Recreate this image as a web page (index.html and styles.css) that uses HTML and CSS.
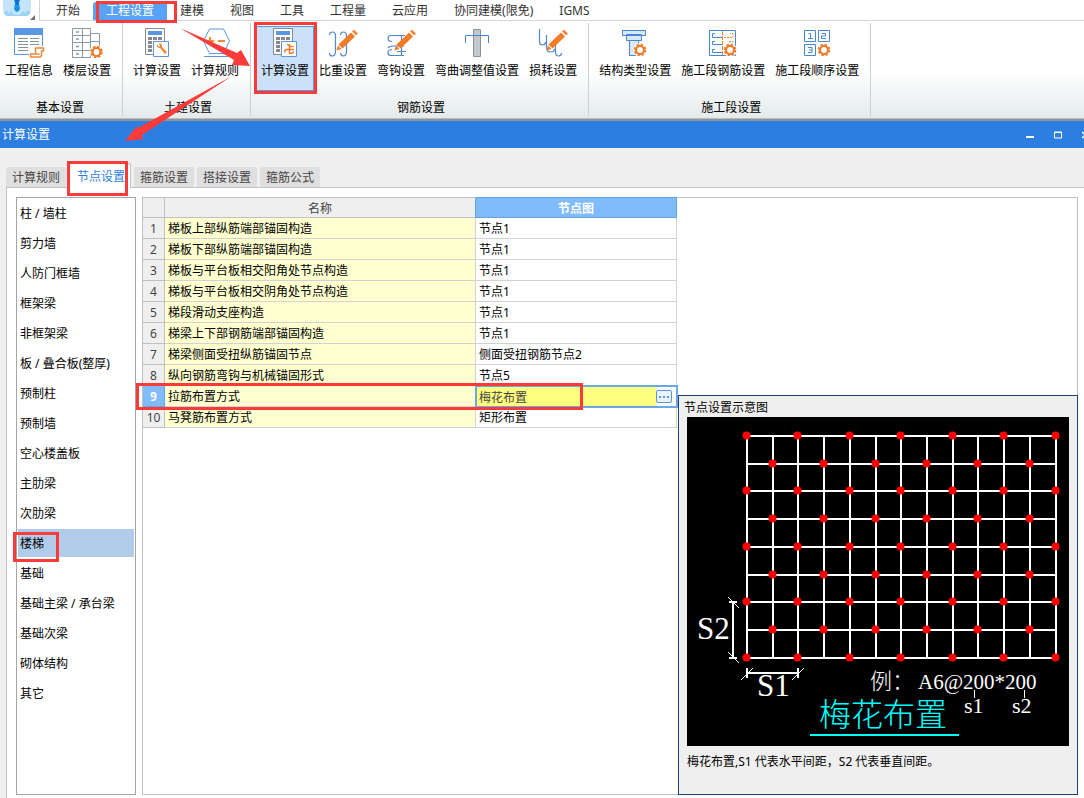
FILE: index.html
```html
<!DOCTYPE html>
<html lang="zh-CN">
<head>
<meta charset="utf-8">
<title>计算设置</title>
<link rel="stylesheet" href="styles.css">
</head>
<body>
<svg class="defs" aria-hidden="true">
  <defs>
    <g id="gear">
      <circle r="7" fill="#fff"/>
      <circle r="5" fill="none" stroke="#ee7a2a" stroke-width="2.6" stroke-dasharray="2.2 1.727"/>
      <circle r="4" fill="#fff" stroke="#ee7a2a" stroke-width="2.2"/>
    </g>
    <g id="pencil">
      <path d="M9.5 24.5l1.5-5 3.500 3.500z" fill="#ee7a2a"/>
      <path d="M11.500 18.500L24 6.500l4 4-12.500 12z" fill="#f07c28"/>
      <path d="M25 5.500l2-2 4 4-2 2z" fill="#ee8a45"/>
    </g>
    <g id="calc">
      <path d="M4.500 2.500h19v26h-19z" fill="#fff" stroke="#87898c"/>
      <path d="M7 5h14v4H7z" fill="#5a97e2"/>
      <path d="M7 11h4v3H7zM12 11h4v3h-4zM17 11h4v3h-4zM7 15h4v3H7zM12 15h4v3h-4zM7 19h4v3H7zM7 23h4v3H7z" fill="#87898c"/>
      <path d="M12.500 15.500h15v15h-15z" fill="#fff" stroke="#5a97e2"/>
    </g>
  </defs>
</svg>

<header class="menu">
  <div class="logo">
    <svg width="36" height="20" viewBox="0 0 36 20" aria-hidden="true">
      <path d="M3 0h28v10q0 6-6 6H9q-6 0-6-6z" fill="#c4e4fa"/>
      <path d="M4 13q3-5 5 1 2-6 4 0 4 2 8 0 2-6 4 0 2-6 5-1-1 3-5 3H9q-4 0-5-3z" fill="#9bd2f5"/>
      <path d="M14 0h6l-1 3 1 6q-1 3-3 3t-3-3l1-6z" fill="#1a8fe8"/>
      <path d="M15 0h4l-1 5h-2z" fill="#0c6fd0"/>
      <path d="M35 15v5h-5z" fill="#707070"/>
    </svg>
  </div>
  <nav class="menu-tabs">
    <button>开始</button>
    <button class="active">工程设置</button>
    <button>建模</button>
    <button>视图</button>
    <button>工具</button>
    <button>工程量</button>
    <button>云应用</button>
    <button>协同建模(限免)</button>
    <button>IGMS</button>
  </nav>
</header>

<section class="ribbon">
  <div class="group">
    <div class="tools">
      <button>
        <svg viewBox="0 0 32 32"><path d="M1.500 2.500h28v26h-28z" fill="#fff" stroke="#5a97e2"/><path d="M1 2h29v7H1z" fill="#5a97e2"/><path d="M5 12.500h10M17 12.500h9M5 15.500h10M17 15.500h9M5 18.500h10M17 18.500h9M5 21.500h10M5 24.500h10" stroke="#8b9296"/><path d="M16 20h16v12H16z" fill="#fff"/><path d="M22.500 27v-5h8v3h-2v4q0 2-2 2h-9v-3h9" fill="#fff" stroke="#e58a35" stroke-width="1.500"/></svg>
        <span>工程信息</span>
      </button>
      <button>
        <svg viewBox="0 0 32 32"><path d="M1.500 2.500h18v29h-18zM1.500 9.500h18M1.500 16.500h18M1.500 24.500h18M11.500 2.500v29M19.500 7.500h9v16M19.500 15.500h9M19.500 23.500h9" fill="none" stroke="#8b9a9e"/><path d="M5 6h3M5 13h3M5 20.500h3M5 28h3" stroke="#8b9a9e" stroke-width="1.500"/><use href="#gear" x="25.500" y="26"/></svg>
        <span>楼层设置</span>
      </button>
    </div>
    <div class="group-name">基本设置</div>
  </div>

  <div class="group">
    <div class="tools">
      <button>
        <svg viewBox="0 0 32 32"><use href="#calc"/><path d="M16 18q-1 4 3 4l5 6 2-2-5-5q0-4-3-4l1 3-1 1z" fill="#ee8a35"/></svg>
        <span>计算设置</span>
      </button>
      <button>
        <svg viewBox="0 0 32 32"><path d="M10.500 3h14l6 12-6 12.500h-14L4.500 15zM5 30.500h24" fill="none" stroke="#5a97e2"/><path d="M7 15h8M11 11v8M19 15h7" stroke="#ee8a35" stroke-width="2"/></svg>
        <span>计算规则</span>
      </button>
    </div>
    <div class="group-name">土建设置</div>
  </div>

  <div class="group">
    <div class="tools">
      <button class="selected">
        <svg viewBox="0 0 32 32"><use href="#calc"/><path d="M20.500 18v10M18 18.500q2.500 0 2.500 2h4M25 23.500h-7q-3 0-2 3M20.500 27.500q4 0 4-2" fill="none" stroke="#ee7a2a" stroke-width="1.500"/></svg>
        <span>计算设置</span>
      </button>
      <button>
        <svg viewBox="0 0 32 32"><path d="M2.500 9q0-3 3-3t3 4v15q0 5-3 5t-3-3M13.500 9q0-3 3-3t3 4v15q0 5-3 5t-3-3" fill="none" stroke="#5089cc" stroke-width="1.200"/><use href="#pencil"/></svg>
        <span>比重设置</span>
      </button>
      <button>
        <svg viewBox="0 0 32 32"><path d="M20 9.500H6q-3 0-3 3t4 3M3 22q1-2 5-2h11M19 29.500H6q-3 0-3-3t4-3M16.500 9v20M12 25.500h9" fill="none" stroke="#5089cc" stroke-width="1.200"/><use href="#pencil"/></svg>
        <span>弯钩设置</span>
      </button>
      <button>
        <svg viewBox="0 0 32 32"><path d="M12.500 3.500h7v27h-7z" fill="#c3c8cd" stroke="#8b9296"/><path d="M4.500 17V9.500h23V17" fill="none" stroke="#4687cf"/></svg>
        <span>弯曲调整值设置</span>
      </button>
      <button>
        <svg viewBox="0 0 32 32"><path d="M2.500 3v13q0 3 3 3t3-3M9.500 9v12q0 5 4 5t4-3M18.500 17v9q0 4 3 4t3-3" fill="none" stroke="#5089cc" stroke-width="1.200"/><use href="#pencil"/></svg>
        <span>损耗设置</span>
      </button>
    </div>
    <div class="group-name">钢筋设置</div>
  </div>

  <div class="group">
    <div class="tools">
      <button>
        <svg viewBox="0 0 32 32"><path d="M10.500 14.500h9v15h-9zM3.500 4.500h23v5h-23zM7.500 8.500h15v6h-15z" fill="#d8e8fa" stroke="#4687cf"/><use href="#gear" x="21" y="24"/></svg>
        <span>结构类型设置</span>
      </button>
      <button>
        <svg viewBox="0 0 32 32"><path d="M2.500 4.500h26v25h-26zM15 11.500H5.500v-4H8M15 18.500H5.500v-3H8M15 26.500H5.500v-3H8" fill="none" stroke="#4687cf"/><path d="M15.500 5v25" stroke="#f08a20" stroke-dasharray="4 1"/><path d="M17 11.500h9v-4h-3M22 15.500h4v3" fill="none" stroke="#f08a20" stroke-dasharray="2 1"/><use href="#gear" x="23" y="24"/></svg>
        <span>施工段钢筋设置</span>
      </button>
      <button>
        <svg viewBox="0 0 32 32"><path d="M3.500 4.500h11v11h-11zM17.500 4.500h11v11h-11zM3.500 18.500h11v11h-11z" fill="#fff" stroke="#4687cf"/><path d="M7.500 7.500h2v5M7 12.500h5M20.500 7.500h4v2.500h-4v2.500h4.500M7 21.500h4v5H7M8 24h3" fill="none" stroke="#4687cf"/><use href="#gear" x="23" y="24"/></svg>
        <span>施工段顺序设置</span>
      </button>
    </div>
    <div class="group-name">施工段设置</div>
  </div>
</section>

<main class="dialog">
  <div class="titlebar">
    <span class="title">计算设置</span>
    <div class="window-buttons">
      <button aria-label="最小化"><svg viewBox="0 0 8 8"><path d="M0 5h8v2H0z" fill="#fff"/></svg></button>
      <button aria-label="最大化"><svg viewBox="0 0 8 8"><path d="M.5 1h7v6h-7zM0 1.500h8" fill="none" stroke="#fff"/></svg></button>
      <button aria-label="关闭"><svg viewBox="0 0 8 8"><path d="M0 1l7 6M7 1L0 7" stroke="#fff" stroke-width="1.500"/></svg></button>
    </div>
  </div>

  <div class="dialog-tabs">
    <button>计算规则</button>
    <button class="active">节点设置</button>
    <button>箍筋设置</button>
    <button>搭接设置</button>
    <button>箍筋公式</button>
  </div>

  <div class="panel">
    <ul class="categories">
      <li>柱 / 墙柱</li>
      <li>剪力墙</li>
      <li>人防门框墙</li>
      <li>框架梁</li>
      <li>非框架梁</li>
      <li>板 / 叠合板(整厚)</li>
      <li>预制柱</li>
      <li>预制墙</li>
      <li>空心楼盖板</li>
      <li>主肋梁</li>
      <li>次肋梁</li>
      <li class="current">楼梯</li>
      <li>基础</li>
      <li>基础主梁 / 承台梁</li>
      <li>基础次梁</li>
      <li>砌体结构</li>
      <li>其它</li>
    </ul>

    <div class="workspace">
      <table class="nodes">
        <thead>
          <tr><th class="num"></th><th class="name">名称</th><th class="node">节点图</th></tr>
        </thead>
        <tbody>
          <tr><th>1</th><td>梯板上部纵筋端部锚固构造</td><td>节点1</td></tr>
          <tr><th>2</th><td>梯板下部纵筋端部锚固构造</td><td>节点1</td></tr>
          <tr><th>3</th><td>梯板与平台板相交阳角处节点构造</td><td>节点1</td></tr>
          <tr><th>4</th><td>梯板与平台板相交阴角处节点构造</td><td>节点1</td></tr>
          <tr><th>5</th><td>梯段滑动支座构造</td><td>节点1</td></tr>
          <tr><th>6</th><td>梯梁上下部钢筋端部锚固构造</td><td>节点1</td></tr>
          <tr><th>7</th><td>梯梁侧面受扭纵筋锚固节点</td><td>侧面受扭钢筋节点2</td></tr>
          <tr><th>8</th><td>纵向钢筋弯钩与机械锚固形式</td><td>节点5</td></tr>
          <tr class="editing"><th>9</th><td>拉筋布置方式</td><td><div class="editor"><input type="text" value="梅花布置" aria-label="拉筋布置方式"><button aria-label="选择节点图"><svg viewBox="0 0 14 11"><path d="M2 5h2v2H2zM6 5h2v2H6zM10 5h2v2h-2z" fill="#5a97d8"/></svg></button></div></td></tr>
          <tr><th>10</th><td>马凳筋布置方式</td><td>矩形布置</td></tr>
        </tbody>
      </table>

      <aside class="preview">
        <h2>节点设置示意图</h2>
        <svg class="diagram" viewBox="0 0 382 329" role="img" aria-label="梅花布置">
          <defs>
            <g id="row-a" fill="#f00"><circle cx="59.500" r="4"/><circle cx="110.500" r="4"/><circle cx="162.500" r="4"/><circle cx="213.500" r="4"/><circle cx="265.500" r="4"/><circle cx="316.500" r="4"/><circle cx="368.500" r="4"/></g>
            <g id="row-b" fill="#f00"><circle cx="85.500" r="4"/><circle cx="136.500" r="4"/><circle cx="188.500" r="4"/><circle cx="239.500" r="4"/><circle cx="290.500" r="4"/><circle cx="342.500" r="4"/></g>
          </defs>
          <path d="M0 0h382v329H0z" fill="#000"/>
          <path d="M60 19v222M86 19v222M111 19v222M137 19v222M163 19v222M189 19v222M214 19v222M240 19v222M266 19v222M291 19v222M317 19v222M343 19v222M369 19v222M60 19h309M60 47h309M60 74h309M60 102h309M60 130h309M60 158h309M60 185h309M60 213h309M60 241h309" stroke="#fff" stroke-width="2"/>
          <use href="#row-a" y="18.500"/><use href="#row-b" y="46.500"/><use href="#row-a" y="73.500"/><use href="#row-b" y="101.500"/><use href="#row-a" y="129.500"/><use href="#row-b" y="157.500"/><use href="#row-a" y="184.500"/><use href="#row-b" y="212.500"/><use href="#row-a" y="240.500"/>
          <path d="M46 185v56M42 185h8M42 241h8M60 256h51M60 251v10M111 251v10" stroke="#fff" stroke-width="2"/>
          <path d="M41 180l11 11M41 235l11 11M54 263l12-12M105 263l12-12M287.500 273v8M337.500 273v8" stroke="#fff"/>
          <g fill="#fff" class="serif">
            <text x="10" y="222" font-size="31">S2</text>
            <text x="70" y="279" font-size="31">S1</text>
            <text x="231" y="272" font-size="21">A6@200*200</text>
            <text x="277" y="296" font-size="22">s1</text>
            <text x="325" y="296" font-size="22">s2</text>
          </g>
          <text class="cjk" x="183" y="272" font-size="22" fill="#fff">例：</text>
          <text class="cjk" x="132" y="309" font-size="32" fill="#0ff">梅花布置</text>
          <path d="M123 318h149" stroke="#0ff" stroke-width="2"/>
        </svg>
        <p>梅花布置,S1 代表水平间距，S2 代表垂直间距。</p>
      </aside>
    </div>
  </div>
</main>

<svg class="marks" width="1084" height="798" viewBox="0 0 1084 798" aria-hidden="true">
  <g fill="none" stroke="#fb3a3a" stroke-width="3">
    <path d="M97.500 2.500h78v19h-78zM255.500 23.500h60v69h-60zM68.500 162.500h58v32h-58zM14.500 533.500h43v27h-43zM137.500 384.500h444v24h-444z"/>
  </g>
  <path d="M180 28l57 25 4-3 9 16-18-1 2-5zM232 76l-94 52-1-2-12 15 18-2-1-4z" fill="#fb3a3a"/>
</svg>
</body>
</html>
```

FILE: styles.css
```css
* {
  box-sizing: border-box;
}

body {
  margin: 0;
  height: 100vh;
  overflow: hidden;
  position: relative;
  display: flex;
  flex-direction: column;
  background: #fff;
  color: #000;
  font: 12px/16px "Noto Sans", "Noto Sans CJK SC", sans-serif;
}

button {
  margin: 0;
  padding: 0;
  border: 0;
  background: none;
  color: inherit;
  font: inherit;
  white-space: nowrap;
}

.defs {
  position: absolute;
  width: 0;
  height: 0;
}

/* Top menu */
.menu {
  display: flex;
  flex: none;
  height: 21px;
}

.logo {
  width: 39px;
  height: 20px;
}

.menu-tabs {
  flex: 1;
  display: flex;
  padding: 2px 0 0 3px;
  border: 1px solid #d5d5d5;
  border-width: 0 0 1px 1px;
  color: #333;
}

.menu-tabs button {
  padding: 0 13px;
  line-height: 18px;
}

.menu-tabs .active {
  background: #58a3f7;
  color: #fff;
  border-radius: 3px 3px 0 0;
}

/* Ribbon */
.ribbon {
  display: flex;
  flex: none;
  height: 100px;
  padding: 2px 0 3px;
  background: linear-gradient(#fff 50%, #e4eaea);
  border-bottom: 2px solid #8d9596;
  box-shadow: inset 0 -1px #b8bebf;
}

.group {
  display: flex;
  flex-direction: column;
  justify-content: space-between;
  padding: 3px 6px 0 5px;
  border-right: 1px solid #ccd0d1;
}

.group:first-child {
  padding-left: 0;
}

.tools {
  display: flex;
}

.tools button {
  display: flex;
  flex-direction: column;
  align-items: center;
  gap: 5px;
  height: 65px;
  padding: 0 5px;
}

.tools svg {
  width: 32px;
  height: 32px;
}

.tools .selected {
  background: #cbe1f9;
  box-shadow: inset 0 0 0 1px #5a9be6;
}

.group-name {
  padding-left: 4px;
  text-align: center;
}

/* Dialog */
.dialog {
  flex: 1;
  min-height: 0;
  display: flex;
  flex-direction: column;
  background: #efefef;
}

.titlebar {
  flex: none;
  display: flex;
  align-items: center;
  justify-content: space-between;
  height: 27px;
  padding-left: 2px;
  background: #2c7fe0;
  color: #fff;
  overflow: hidden;
}

.window-buttons {
  display: flex;
  gap: 20px;
  margin-right: -6px;
}

.window-buttons button {
  display: flex;
}

.window-buttons svg {
  width: 8px;
  height: 8px;
}

.dialog-tabs {
  flex: none;
  display: flex;
  align-items: flex-end;
  gap: 3px;
  height: 39px;
  padding-left: 6px;
}

.dialog-tabs button {
  height: 20px;
  padding: 1px 6px 0;
  border-radius: 3px 3px 0 0;
  background: #dfdfdf;
  color: #444;
}

.dialog-tabs .active {
  z-index: 1;
  height: 25px;
  margin-bottom: -1px;
  padding: 1px 5px 0 7px;
  border: 1px solid #c3c3c7;
  border-bottom: 0;
  background: #fff;
  color: #2c7fe0;
}

.panel {
  flex: 1;
  min-height: 0;
  display: flex;
  gap: 6px;
  margin-left: 6px;
  padding: 9px 6px 3px 9px;
  border: 1px solid #c3c3c7;
  border-width: 1px 0 0 1px;
  background: #fff;
}

.categories {
  flex: none;
  width: 120px;
  margin: 0;
  padding: 1px;
  border: 1px solid #a5a5a5;
  list-style: none;
}

.categories li {
  height: 28px;
  margin-bottom: 2px;
  padding: 2px 0 0 2px;
  line-height: 26px;
}

.categories .current {
  background: #b1cbeb;
}

.workspace {
  flex: 1;
  position: relative;
  border: 1px solid #c0c0c0;
}

/* Node table */
.nodes {
  width: 534px;
  table-layout: fixed;
  border-collapse: separate;
  border-spacing: 0;
}

.nodes th,
.nodes td {
  height: 21px;
  padding: 2px 3px 0;
  border: 1px solid #d2d2d2;
  border-width: 0 1px 1px 0;
  line-height: 18px;
  text-align: left;
  white-space: nowrap;
}

.nodes th {
  padding: 2px 0 0;
  border-color: #c0c0c0;
  background: #efefef;
  color: #444;
  font-weight: 400;
  text-align: center;
}

.nodes thead th {
  height: 20px;
  line-height: 17px;
}

.nodes .num {
  width: 22px;
}

.nodes .name {
  width: 311px;
}

.nodes .node {
  border-color: #62a2ea;
  background: #80bbfc;
  box-shadow: 0 -1px #62a2ea, -1px 0 #62a2ea;
  color: #fff;
  font-weight: 700;
}

.nodes td:nth-child(2) {
  background: #ffffcf;
}

.nodes .editing th {
  background: #80bbfc;
  border-color: #62a2ea;
  color: #fff;
  font-weight: 700;
}

.nodes .editing td:last-child {
  padding: 0;
  outline: 2px solid #69a7e6;
  outline-offset: -1px;
}

.editor {
  display: flex;
  align-items: center;
  height: 20px;
  padding-right: 4px;
}

.editor input {
  flex: 1;
  min-width: 0;
  height: 20px;
  padding: 2px 3px 0;
  border: 0;
  outline: 0;
  background: #ffff80;
  color: #444;
  font: inherit;
}

.editor button {
  display: flex;
  border: 1px solid #5a97d8;
  border-radius: 2px;
  background: #eaf3fd;
}

.editor svg {
  width: 14px;
  height: 11px;
}

/* Floating preview */
.preview {
  position: absolute;
  right: -1px;
  bottom: -1px;
  width: 400px;
  height: 400px;
  padding: 4px 8px 0;
  border: 1px solid #1f4078;
  background: #efefef;
}

.preview h2 {
  margin: 0 0 1px -3px;
  font: inherit;
}

.preview p {
  margin: 8px 0 0;
}

.diagram {
  display: block;
  width: 100%;
}

.serif {
  font-family: "Liberation Serif", serif;
}

.cjk {
  font-family: "Noto Sans CJK SC", sans-serif;
  font-weight: 300;
}

/* Callouts */
.marks {
  position: absolute;
  z-index: 2;
  left: 0;
  top: 0;
  pointer-events: none;
}
```
